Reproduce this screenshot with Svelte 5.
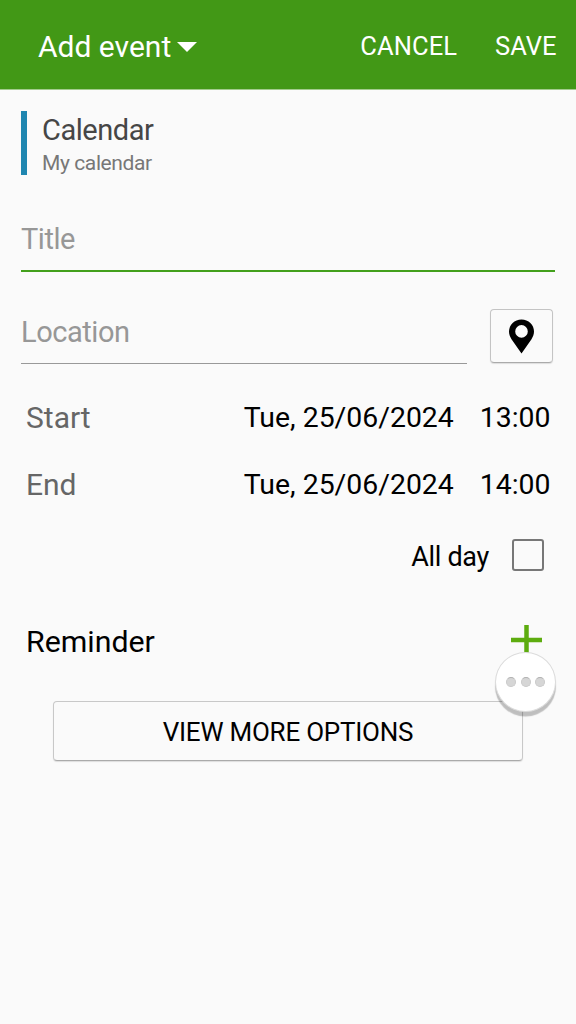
<script>
  let title = '';
  let location = '';
  let allDay = false;

  const times = [
    { label: 'Start', date: 'Tue, 25/06/2024', time: '13:00' },
    { label: 'End', date: 'Tue, 25/06/2024', time: '14:00' }
  ];
</script>

<div class="screen">
  <header>
    <button class="event-type">
      <span>Add event</span>
      <svg width="20" height="10" viewBox="0 0 20 10"><path d="M0 0H20L10 10Z" fill="#fff" /></svg>
    </button>
    <button class="action cancel">CANCEL</button>
    <button class="action save">SAVE</button>
  </header>

  <main>
    <div class="calendar">
      <div class="name">Calendar</div>
      <div class="account">My calendar</div>
    </div>

    <input class="title" bind:value={title} placeholder="Title" aria-label="Title" />

    <div class="location-row">
      <input class="location" bind:value={location} placeholder="Location" aria-label="Location" />
      <button class="pin" aria-label="Pick location">
        <svg width="26" height="35" viewBox="0 0 26 35">
          <path fill="#000" fill-rule="evenodd" d="M12.500 .5C5.500 .5 0 5.800 0 12.600c0 2.800 1 5.200 2.500 7.600L12.500 34.500 22.500 20.200c1.500-2.400 2.500-4.800 2.500-7.600C25 5.800 19.500 .500 12.500 .500Zm0 5.600a6.300 6.300 0 1 1 0 12.600a6.300 6.300 0 1 1 0-12.600Z" />
        </svg>
      </button>
    </div>

    {#each times as row}
      <div class="time-row">
        <span class="label">{row.label}</span>
        <span class="date">{row.date}</span>
        <span class="time">{row.time}</span>
      </div>
    {/each}

    <label class="all-day">
      <span>All day</span>
      <input type="checkbox" bind:checked={allDay} />
    </label>

    <div class="reminder">
      <span>Reminder</span>
      <button class="add" aria-label="Add reminder">
        <svg width="32" height="32" viewBox="0 0 32 32"><path d="M0 16H31M15.500 1V32" stroke="#5dac0f" stroke-width="4.500" /></svg>
      </button>
    </div>

    <button class="more">VIEW MORE OPTIONS</button>
  </main>

  <!-- floating assistant button -->
  <button class="assist" aria-label="Assistant menu">
    <i></i><i></i><i></i>
  </button>
</div>

<style>
  :global(body) {
    background: #fafafa;
  }

  .screen {
    position: relative;
    width: 576px;
    height: 1024px;
    overflow: hidden;
    background: #fafafa;
    color: #000;
    font-family: Roboto, sans-serif;
  }

  button,
  input {
    box-sizing: border-box;
    margin: 0;
    padding: 0;
    border: none;
    border-radius: 0;
    outline: none;
    background: none;
    color: inherit;
    font-family: inherit;
  }

  svg {
    display: block;
  }

  /* --- HEADER --- */
  header {
    display: flex;
    align-items: center;
    box-sizing: border-box;
    height: 90px;
    padding: 2px 19.5px 0 38px;
    border-bottom: 1px solid #a3cc8d;
    background: #429816;
    color: #fff;
  }

  .event-type {
    display: flex;
    align-items: center;
    gap: 6px;
    margin-right: auto;
    padding-top: 1px;
    font-size: 30px;
  }

  .event-type svg {
    margin-top: 2px;
  }

  .action {
    font-size: 25.5px;
  }

  .save {
    margin-left: 38px;
  }

  .cancel {
    letter-spacing: 0.1px;
  }

  /* --- FORM --- */
  main {
    padding: 21px 21px 0;
  }

  .calendar {
    box-sizing: border-box;
    height: 64px;
    padding: 1px 0 0 15px;
    border-left: 6px solid #1f86b0;
    white-space: nowrap;
  }

  .name {
    color: #464646;
    font-size: 29px;
    letter-spacing: -0.45px;
    line-height: 36px;
  }

  .account {
    color: #777;
    font-size: 21px;
    letter-spacing: -0.4px;
    line-height: 31px;
  }

  .title,
  .location {
    display: block;
    font-size: 29px;
    letter-spacing: -0.45px;
  }

  .title::placeholder,
  .location::placeholder {
    color: #979797;
    opacity: 1;
  }

  .title {
    width: 534px;
    height: 68px;
    margin-top: 29px;
    padding-top: 4px;
    border-bottom: 2px solid #43a01c;
  }

  .location-row {
    display: flex;
    justify-content: space-between;
    margin-top: 37px;
    padding-right: 2px;
  }

  .location {
    width: 446px;
    height: 55px;
    padding-bottom: 8px;
    border-bottom: 1px solid #999;
  }

  .pin {
    display: flex;
    align-items: center;
    justify-content: center;
    width: 63px;
    height: 54px;
    padding: 1px 0 0;
    border: 1px solid #c4c4c4;
    border-bottom-color: #aaa;
    border-radius: 4px;
    box-shadow: 0 1px 1px #ddd;
  }

  .time-row {
    display: flex;
    height: 67px;
    padding: 0 4.5px 0 5px;
    font-size: 28.4px;
    line-height: 68px;
  }

  .location-row + .time-row {
    margin-top: 20px;
  }

  .label {
    margin-right: auto;
    color: #666;
    font-size: 30px;
  }

  .time {
    margin-left: 26px;
  }

  .all-day {
    display: flex;
    align-items: center;
    justify-content: flex-end;
    gap: 23px;
    height: 76px;
    padding-right: 11px;
    font-size: 27px;
    letter-spacing: -0.3px;
  }

  .all-day span {
    padding-top: 1px;
  }

  .all-day input {
    appearance: none;
    width: 32px;
    height: 32px;
    margin-top: -2px;
    border: 2px solid #777;
    border-radius: 3px;
  }

  .reminder {
    display: flex;
    align-items: center;
    justify-content: space-between;
    height: 92px;
    padding: 0 12px 0 5px;
    font-size: 30.3px;
  }

  .reminder span {
    padding-top: 2px;
  }

  .more {
    display: block;
    width: 470px;
    height: 60px;
    margin: 15px 0 0 32px;
    padding-top: 2px;
    border: 1px solid #c8c8c8;
    border-bottom-color: #aaa;
    border-radius: 4px;
    box-shadow: 0 1px 1px #ddd;
    font-size: 26px;
    letter-spacing: -0.23px;
  }

  /* --- FLOATING BUTTON --- */
  .assist {
    position: absolute;
    top: 652px;
    left: 495px;
    display: flex;
    align-items: center;
    justify-content: center;
    gap: 4.5px;
    width: 61px;
    height: 60px;
    border: 1px solid #dcdcdc;
    border-radius: 50%;
    background: #fff;
    box-shadow: 0 4.5px 1px rgba(0, 0, 0, 0.24);
  }

  .assist i {
    box-sizing: border-box;
    width: 10px;
    height: 10px;
    border: 1px solid #cacaca;
    border-top-color: #b0b0b0;
    border-radius: 50%;
    background: #d6d6d6;
  }
</style>
